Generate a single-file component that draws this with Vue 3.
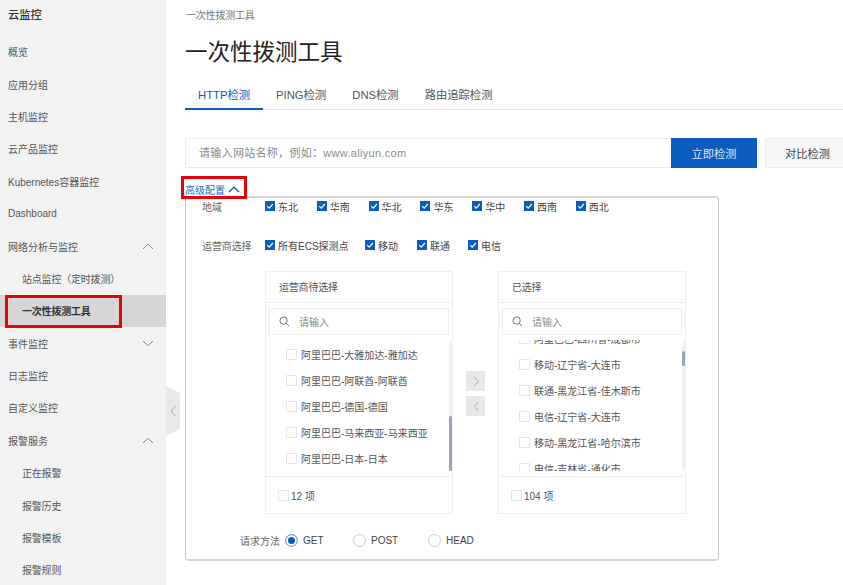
<script setup>
const menu = [
  { t: '概览' }, { t: '应用分组' }, { t: '主机监控' }, { t: '云产品监控' },
  { t: 'Kubernetes容器监控' }, { t: 'Dashboard' },
  { t: '网络分析与监控', c: 'up' },
  { t: '站点监控（定时拨测）', sub: true },
  { t: '一次性拨测工具', sub: true, active: true },
  { t: '事件监控', c: 'down' }, { t: '日志监控' }, { t: '自定义监控' },
  { t: '报警服务', c: 'up' },
  { t: '正在报警', sub: true }, { t: '报警历史', sub: true },
  { t: '报警模板', sub: true }, { t: '报警规则', sub: true },
]
const tabs = ['HTTP检测', 'PING检测', 'DNS检测', '路由追踪检测']
const regions = ['东北', '华南', '华北', '华东', '华中', '西南', '西北']
const isps = [
  { t: '所有ECS探测点', w: 100 }, { t: '移动', w: 52 }, { t: '联通', w: 51 }, { t: '电信', w: 52 },
]
const leftItems = ['阿里巴巴-大雅加达-雅加达', '阿里巴巴-阿联酋-阿联酋', '阿里巴巴-德国-德国', '阿里巴巴-马来西亚-马来西亚', '阿里巴巴-日本-日本']
const rightItems = ['阿里巴巴-四川省-成都市', '移动-辽宁省-大连市', '联通-黑龙江省-佳木斯市', '电信-辽宁省-大连市', '移动-黑龙江省-哈尔滨市', '电信-吉林省-通化市']
const transfers = [
  { title: '运营商待选择', items: leftItems, count: '12 项', thumb: 'thumb-left', shift: '' },
  { title: '已选择', items: rightItems, count: '104 项', thumb: 'thumb-right', shift: 'shifted' },
]
const methods = [
  { t: 'GET', w: 68, on: true }, { t: 'POST', w: 75 }, { t: 'HEAD', w: 60 },
]
</script>

<template>
  <div class="page">
    <aside class="side">
      <div class="side-head">云监控</div>
      <ul class="menu">
        <li v-for="m in menu" :key="m.t" class="item" :class="{ sub: m.sub, active: m.active }">
          <span>{{ m.t }}</span>
          <svg v-if="m.c" class="caret" viewBox="0 0 12 7" width="12" height="7">
            <path :d="m.c === 'up' ? 'M1 6L6 1.2L11 6' : 'M1 1L6 5.8L11 1'" fill="none" stroke="#8a8a8a" stroke-width="1" />
          </svg>
        </li>
      </ul>
      <div class="redbox side-red"></div>
      <div class="collapse">
        <svg viewBox="0 0 6 12" width="6" height="12"><path d="M5.5 1L1 6L5.5 11" fill="none" stroke="#a8a8a8" stroke-width="1" /></svg>
      </div>
    </aside>

    <main class="main">
      <div class="crumb">一次性拨测工具</div>
      <h1 class="title">一次性拨测工具</h1>
      <nav class="tabs">
        <span v-for="(t, i) in tabs" :key="t" class="tab" :class="{ on: i === 0 }">{{ t }}</span>
      </nav>

      <div class="search-row">
        <div class="url-input">请输入网站名称，例如：www.aliyun.com</div>
        <button class="btn primary">立即检测</button>
        <button class="btn plain">对比检测</button>
      </div>

      <div class="adv">
        <span>高级配置</span>
        <svg viewBox="0 0 12 7" width="12" height="7"><path d="M1 6L6 1.2L11 6" fill="none" stroke="#0a5cc0" stroke-width="1.4" /></svg>
        <div class="redbox adv-red"></div>
      </div>

      <section class="panel">
        <div class="row region-row">
          <label class="lab">地域</label>
          <div class="checks">
            <span v-for="r in regions" :key="r" class="chk region">
              <svg class="tick" viewBox="0 0 10 10" width="10" height="10"><rect width="10" height="10" fill="#0a5cc0" /><path d="M2.2 5.2L4.2 7.2L7.9 3" fill="none" stroke="#fff" stroke-width="1.2" /></svg>
              {{ r }}
            </span>
          </div>
        </div>
        <div class="row isp-row">
          <label class="lab">运营商选择</label>
          <div class="checks">
            <span v-for="r in isps" :key="r.t" class="chk" :style="{ width: r.w + 'px' }">
              <svg class="tick" viewBox="0 0 10 10" width="10" height="10"><rect width="10" height="10" fill="#0a5cc0" /><path d="M2.2 5.2L4.2 7.2L7.9 3" fill="none" stroke="#fff" stroke-width="1.2" /></svg>
              {{ r.t }}
            </span>
          </div>
        </div>

        <div class="transfer">
          <template v-for="(b, i) in transfers" :key="b.title">
            <div class="tbox">
              <div class="thead">{{ b.title }}</div>
              <div class="tsearch">
                <svg viewBox="0 0 12 12" width="11" height="11"><circle cx="5" cy="5" r="4" fill="none" stroke="#666" stroke-width="1" /><path d="M8 8L11 11" stroke="#666" stroke-width="1" /></svg>
                <span>请输入</span>
              </div>
              <div class="tlist">
                <ul :class="b.shift">
                  <li v-for="x in b.items" :key="x"><i class="box"></i>{{ x }}</li>
                </ul>
                <div class="track"><div class="thumb" :class="b.thumb"></div></div>
              </div>
              <div class="tfoot"><i class="box"></i>{{ b.count }}</div>
            </div>
            <div v-if="i === 0" class="arrows">
              <span class="arrow"><svg viewBox="0 0 6 12" width="6" height="11"><path d="M1 1L5.5 6L1 11" fill="none" stroke="#a8a8a8" stroke-width="1" /></svg></span>
              <span class="arrow"><svg viewBox="0 0 6 12" width="6" height="11"><path d="M5.5 1L1 6L5.5 11" fill="none" stroke="#a8a8a8" stroke-width="1" /></svg></span>
            </div>
          </template>
        </div>

        <div class="method">
          <label class="lab-m">请求方法</label>
          <span v-for="m in methods" :key="m.t" class="radio" :style="{ width: m.w + 'px' }">
            <i class="dot" :class="{ on: m.on }"></i>{{ m.t }}
          </span>
        </div>
      </section>
    </main>
  </div>
</template>

<style>
html, body { margin: 0; overflow: hidden; background: #fff; }
</style>

<style scoped>
.page {
  display: flex;
  width: 843px;
  height: 585px;
  overflow: hidden;
  font-family: "Liberation Sans", "Noto Sans CJK SC", sans-serif;
  color: #333;
}
.side {
  position: relative;
  flex: 0 0 166px;
  background: #f2f2f2;
}
.side-head {
  height: 34px;
  padding-left: 8px;
  line-height: 30px;
  font-size: 11.3px;
  font-weight: 500;
  color: #333;
  border-bottom: 1px solid #eee;
  box-sizing: border-box;
}
.menu {
  list-style: none;
  margin: 1.5px 0 0;
  padding: 0;
  display: grid;
  grid-auto-rows: 32.4px;
}
.item {
  display: flex;
  align-items: center;
  justify-content: space-between;
  padding: 0 12px 0 8px;
  font-size: 10px;
  color: #555;
}
.item.sub { padding-left: 22px; letter-spacing: -0.2px; }
.item.active {
  background: #d6d6d6;
  color: #333;
  font-weight: 700;
}
.caret { flex: none; }
.redbox {
  position: absolute;
  box-sizing: border-box;
  border: 3px solid #e8000b;
  pointer-events: none;
}
.side-red { left: 5px; top: 295px; width: 117px; height: 33px; }
.collapse {
  position: absolute;
  left: 166px;
  top: 386px;
  width: 14px;
  height: 50px;
  background: #e8e8e8;
  clip-path: polygon(0 0, 100% 14%, 100% 86%, 0 100%);
  display: flex;
  align-items: center;
  justify-content: center;
}
.main {
  flex: 1;
  min-width: 0;
  padding-left: 19px;
}
.crumb {
  padding-left: 1px;
  height: 31px;
  line-height: 31px;
  font-size: 10px;
  letter-spacing: -0.2px;
  color: #777;
}
.title {
  margin: 0;
  height: 44px;
  line-height: 43px;
  font-size: 22.5px;
  font-weight: 400;
  color: #222;
}
.tabs {
  display: flex;
  height: 35px;
  border-bottom: 1px solid #e8e8e8;
  box-sizing: border-box;
}
.tab {
  flex: none;
  white-space: nowrap;
  line-height: 40px;
  font-size: 11.3px;
  color: #555;
  box-sizing: border-box;
  height: 35px;
  margin-right: 26px;
}
.tab.on {
  width: 78px;
  margin-right: 13px;
  padding-left: 13px;
  color: #0a5cc0;
  border-bottom: 2px solid #0a5cc0;
}
.search-row {
  display: flex;
  margin-top: 28px;
  height: 30px;
}
.url-input {
  flex: 0 0 486px;
  box-sizing: border-box;
  border: 1px solid #ebebeb;
  border-right: 0;
  padding-left: 13px;
  line-height: 28px;
  font-size: 11px;
  color: #8a8a8a;
  letter-spacing: 0.3px;
}
.btn {
  border: 0;
  padding: 0;
  font: inherit;
  font-size: 11.2px;
}
.primary {
  flex: 0 0 86px;
  background: #0a5cc0;
  color: #dfe9f7;
  margin-right: 8px;
}
.plain {
  flex: 0 0 85px;
  background: #f7f7f7;
  border: 1px solid #ececec;
  color: #444;
}
.adv {
  position: relative;
  display: flex;
  align-items: center;
  gap: 3px;
  height: 14px;
  margin-top: 14px;
  font-size: 10px;
  color: #1e6fd0;
}
.adv-red { left: -4px; top: -6px; width: 66px; height: 23px; }
.panel {
  box-sizing: border-box;
  width: 534px;
  height: 365px;
  border: 1px solid #c8c8c8;
  border-top-width: 2px;
  border-bottom-width: 2px;
  border-top-color: #d8d8d8;
  border-bottom-color: #d8d8d8;
  border-radius: 4px;
  padding-left: 16px;
}
.row { display: flex; align-items: center; height: 14px; }
.region-row { margin-top: 1px; }
.isp-row { margin-top: 25px; }
.lab {
  flex: 0 0 63px;
  font-size: 10px;
  letter-spacing: -0.1px;
  color: #666;
}
.checks { display: flex; }
.chk {
  display: flex;
  align-items: center;
  gap: 3px;
  font-size: 10px;
  color: #444;
}
.chk.region { width: 51.8px; }
.tick { flex: none; }
.transfer {
  display: flex;
  margin-top: 19px;
  margin-left: 63px;
}
.tbox {
  box-sizing: border-box;
  width: 188px;
  height: 243px;
  border: 1px solid #eee;
  display: flex;
  flex-direction: column;
}
.thead {
  height: 31px;
  line-height: 31px;
  padding-left: 13px;
  font-size: 10px;
  letter-spacing: -0.2px;
  color: #555;
  border-bottom: 1px solid #eee;
  box-sizing: border-box;
}
.tsearch {
  margin: 5px 3px 0;
  height: 27px;
  box-sizing: border-box;
  border: 1px solid #eee;
  display: flex;
  align-items: center;
  gap: 9px;
  padding-left: 9px;
  font-size: 10px;
  color: #888;
}
.tsearch svg { flex: none; }
.tlist {
  position: relative;
  height: 136px;
  margin-top: 5px;
  overflow: hidden;
  border-bottom: 1px solid #eee;
  box-sizing: content-box;
}
.tlist ul {
  list-style: none;
  margin: 1px 0 0;
  padding: 0;
  height: 131px;
  overflow: hidden;
}
.tlist ul.shifted { margin-top: 0; }
.tlist ul.shifted li:first-child { margin-top: -15px; }
.tlist li {
  height: 26px;
  display: flex;
  align-items: center;
  padding-left: 20px;
  font-size: 10px;
  color: #555;
}
.box {
  flex: none;
  display: block;
  width: 9px;
  height: 9px;
  border: 1px solid #e6e6e6;
  background: #fff;
  margin-right: 4px;
}
.track {
  position: absolute;
  right: 0;
  top: 1px;
  width: 3px;
  height: 130px;
  background: #eef0f3;
  border-radius: 2px;
}
.thumb {
  position: absolute;
  left: 0;
  width: 3px;
  background: #97a5b8;
  border-radius: 2px;
}
.thumb-left { top: 75px; height: 55px; }
.thumb-right { top: 10px; height: 15px; }
.tfoot {
  flex: 1;
  display: flex;
  align-items: center;
  padding-left: 12px;
  font-size: 10px;
  color: #555;
}
.tfoot .box { margin-right: 2px; }
.arrows {
  flex: 0 0 45px;
  display: flex;
  flex-direction: column;
  align-items: center;
  gap: 5px;
  padding-top: 100px;
  box-sizing: border-box;
}
.arrow {
  width: 19px;
  height: 20px;
  background: #e8e8e8;
  display: flex;
  align-items: center;
  justify-content: center;
}
.method {
  display: flex;
  align-items: center;
  height: 14px;
  margin-top: 19px;
  margin-left: 38px;
  font-size: 10px;
  color: #444;
}
.lab-m { flex: 0 0 45px; color: #666; }
.radio { display: flex; align-items: center; gap: 5px; }
.dot {
  flex: none;
  display: block;
  box-sizing: border-box;
  width: 13px;
  height: 13px;
  border-radius: 50%;
  border: 1px solid #ccc;
  background: #fff;
}
.dot.on {
  border-color: #7fa9e0;
  background: #0a5cc0;
  box-shadow: inset 0 0 0 2px #fff;
}
</style>
